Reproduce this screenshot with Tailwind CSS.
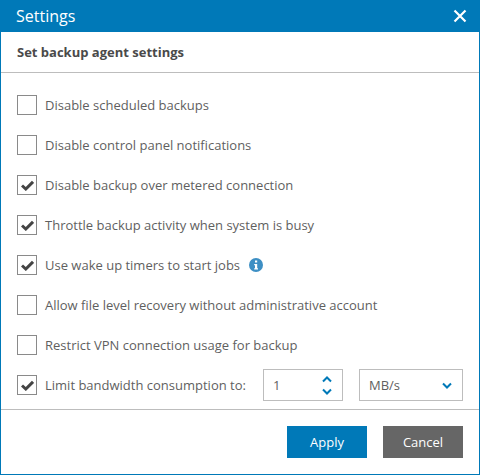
<!DOCTYPE html>
<html>
<head>
<meta charset="utf-8">
<script src="https://cdn.jsdelivr.net/npm/@tailwindcss/browser@4"></script>
</head>
<body class="bg-white">
<div class="w-[480px] h-[475px] flex flex-col border border-t-0 border-[#0079b8] bg-white font-['Open_Sans',sans-serif] text-[#5f5f5f] overflow-hidden">
  <div class="h-8 -mx-px flex items-center justify-between bg-[#0079b8] pl-4 pr-[13px] text-white shrink-0">
    <span class="text-[16px] leading-8">Settings</span>
    <svg class="w-[14px] h-[14px]" viewBox="0 0 14 14"><path d="M1.5 1.5 L12.5 12.5 M12.5 1.5 L1.5 12.5" stroke="#fff" stroke-width="2.2" fill="none"/></svg>
  </div>
  <div class="h-[38px] pl-4 pt-[2px] flex items-center border-b border-[#bdbdbd] box-content shrink-0 text-[13px] font-bold text-[#4a4a4a]">Set backup agent settings</div>
  <div class="flex-1 flex flex-col gap-5 pl-4 pr-4 pt-[22px] text-[13px]">
    <label class="h-5 flex items-center gap-2">
      <span class="w-5 h-5 border border-[#8a8a8a] shrink-0"></span><span class="mt-[2px]">Disable scheduled backups</span>
    </label>
    <label class="h-5 flex items-center gap-2">
      <span class="w-5 h-5 border border-[#8a8a8a] shrink-0"></span><span class="mt-[2px]">Disable control panel notifications</span>
    </label>
    <label class="h-5 flex items-center gap-2">
      <span class="w-5 h-5 border border-[#8a8a8a] shrink-0 flex items-center justify-center"><svg class="w-[13px] h-[11px]" viewBox="0 0 13 11"><path d="M1 5.5 L4.8 9 L12 1.8" stroke="#444" stroke-width="3" fill="none"/></svg></span><span class="mt-[2px]">Disable backup over metered connection</span>
    </label>
    <label class="h-5 flex items-center gap-2">
      <span class="w-5 h-5 border border-[#8a8a8a] shrink-0 flex items-center justify-center"><svg class="w-[13px] h-[11px]" viewBox="0 0 13 11"><path d="M1 5.5 L4.8 9 L12 1.8" stroke="#444" stroke-width="3" fill="none"/></svg></span><span class="mt-[2px]">Throttle backup activity when system is busy</span>
    </label>
    <label class="h-5 flex items-center gap-2">
      <span class="w-5 h-5 border border-[#8a8a8a] shrink-0 flex items-center justify-center"><svg class="w-[13px] h-[11px]" viewBox="0 0 13 11"><path d="M1 5.5 L4.8 9 L12 1.8" stroke="#444" stroke-width="3" fill="none"/></svg></span><span class="mt-[2px]">Use wake up timers to start jobs</span>
      <svg class="w-[14px] h-[14px] ml-[1px]" viewBox="0 0 14 14"><circle cx="7" cy="7" r="7" fill="#3d8fc4"/><rect x="6" y="2.5" width="2.2" height="2" fill="#fff"/><path d="M5.2 6 H8.2 V10.2 H9 V11.4 H5.2 V10.2 H6 V7.2 H5.2 Z" fill="#fff"/></svg>
    </label>
    <label class="h-5 flex items-center gap-2">
      <span class="w-5 h-5 border border-[#8a8a8a] shrink-0"></span><span class="mt-[2px]">Allow file level recovery without administrative account</span>
    </label>
    <label class="h-5 flex items-center gap-2">
      <span class="w-5 h-5 border border-[#8a8a8a] shrink-0"></span><span class="mt-[2px]">Restrict VPN connection usage for backup</span>
    </label>
    <div class="h-5 flex items-center">
      <span class="w-5 h-5 border border-[#8a8a8a] shrink-0 flex items-center justify-center"><svg class="w-[13px] h-[11px]" viewBox="0 0 13 11"><path d="M1 5.5 L4.8 9 L12 1.8" stroke="#444" stroke-width="3" fill="none"/></svg></span>
      <span class="ml-2 w-[218px] mt-[2px]">Limit bandwidth consumption to:</span>
      <div class="w-20 h-8 shrink-0 border border-[#bdbdbd] flex items-center justify-between pl-[9px] pr-[10px]">
        <span class="mt-[2px]">1</span>
        <span class="flex flex-col gap-[5px]">
          <svg class="w-[10px] h-[7px] block" viewBox="0 0 10 7"><path d="M1 5.5 L5 1.5 L9 5.5" stroke="#0079b8" stroke-width="2" fill="none"/></svg>
          <svg class="w-[10px] h-[7px] block" viewBox="0 0 10 7"><path d="M1 1.5 L5 5.5 L9 1.5" stroke="#0079b8" stroke-width="2" fill="none"/></svg>
        </span>
      </div>
      <div class="w-[104px] h-8 ml-4 shrink-0 border border-[#bdbdbd] flex items-center justify-between pl-[9px] pr-[10px]">
        <span class="mt-[2px]">MB/s</span>
        <svg class="w-[10px] h-[7px] block" viewBox="0 0 10 7"><path d="M1 1.5 L5 5.5 L9 1.5" stroke="#0079b8" stroke-width="2" fill="none"/></svg>
      </div>
    </div>
  </div>
  <div class="h-[65px] shrink-0 box-border border-t border-[#bdbdbd] flex justify-end items-start gap-4 pt-4 pr-4 text-[13px] text-white">
    <button class="w-20 h-8 pt-[2px] bg-[#0079b8] font-medium">Apply</button>
    <button class="w-20 h-8 pt-[2px] bg-[#666] font-medium">Cancel</button>
  </div>
</div>
</body>
</html>
